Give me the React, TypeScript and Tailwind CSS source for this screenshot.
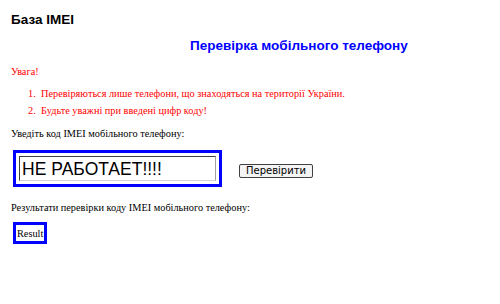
import React from "react";

const App: React.FC = () => {
  return (
    <div className="w-[500px] h-[304px] bg-white overflow-hidden pl-[11px] pt-[12px]">
      <h1 className="font-['Liberation_Sans',Arial,sans-serif] font-bold text-[13.5px] leading-[16px] text-black">
        База IMEI
      </h1>
      <h2 className="mt-[10px] pl-[179px] font-['Liberation_Sans',Arial,sans-serif] font-bold text-[13.5px] leading-[16px] text-[#0000ff]">
        Перевірка мобільного телефону
      </h2>

      <div className="font-['Liberation_Serif','Times_New_Roman',serif] text-[10.3px] leading-[13px]">
        <p className="mt-[11px] text-[#ff0000]">Увага!</p>
        <ol className="mt-[9px] pl-[17px] text-[#ff0000] flex flex-col gap-[4px]">
          <li className="flex">
            <span className="w-[13px]">1.</span>
            <span>Перевіряються лише телефони, що знаходяться на території України.</span>
          </li>
          <li className="flex">
            <span className="w-[13px]">2.</span>
            <span>Будьте уважні при введені цифр коду!</span>
          </li>
        </ol>

        <p className="mt-[10px] text-black">Уведіть код IMEI мобільного телефону:</p>

        <div className="mt-[10px] ml-[2px] flex items-center">
          <div className="w-[209px] h-[37px] border-[3px] border-[#0000ff] bg-white p-[3px]">
            <div className="h-full border border-t-[#404040] border-l-[#404040] border-r-[#a0a0a0] border-b-[#d4d4d4] flex items-center pl-[2px]">
              <span className="font-['Liberation_Sans',Arial,sans-serif] text-[17.5px] leading-[20px] text-black">
                НЕ РАБОТАЕТ!!!!
              </span>
            </div>
          </div>
          <button className="ml-[17px] mt-[4px] h-[14px] px-[6px] border border-[#404040] rounded-[2px] bg-[#f4f4f4] font-['DejaVu_Sans',Tahoma,sans-serif] text-[10px] leading-[12px] text-black flex items-center">
            Перевірити
          </button>
        </div>

        <p className="mt-[14px] text-black">Результати перевірки коду IMEI мобільного телефону:</p>

        <div className="mt-[8px] ml-[2px] inline-flex border-[3px] border-[#0000ff] px-[1px] h-[22px] items-center">
          <span className="text-black">Result</span>
        </div>
      </div>
    </div>
  );
};

export default App;
